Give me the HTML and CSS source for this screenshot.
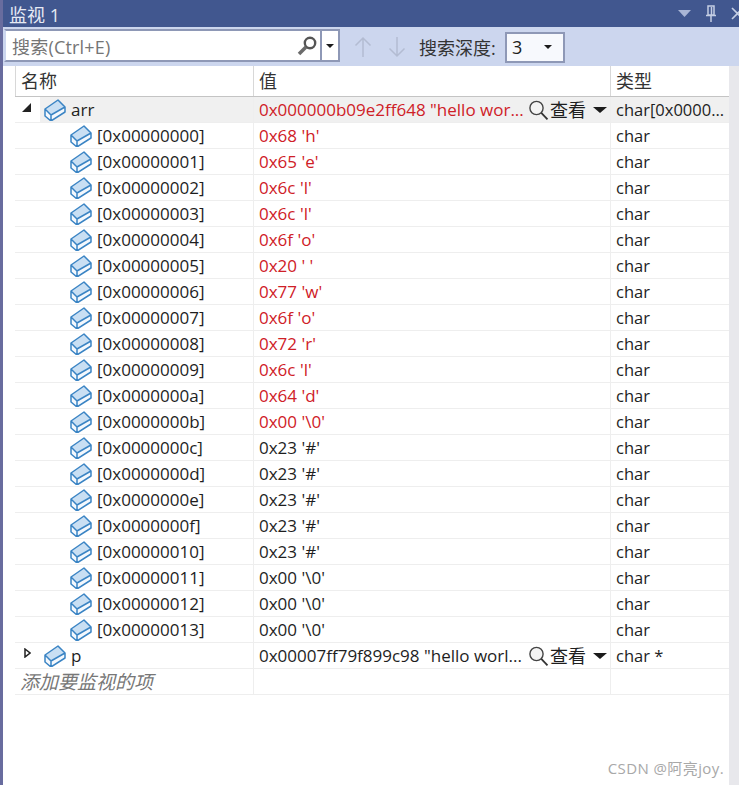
FILE: index.html
```html
<!DOCTYPE html>
<html lang="zh">
<head>
<meta charset="utf-8">
<title>监视 1</title>
<link rel="stylesheet" href="styles.css">
</head>
<body>
<svg class="defs" width="0" height="0">
  <symbol id="cube" viewBox="0 0 22 22">
    <path d="M1 10 14 1l7 7-14 8z" fill="#c9dff3"/>
    <path d="M1 10l6 6v6l-6-5zM7 16l14-8v5L7 22z" fill="#f4f8fd"/>
    <path d="M1 10 14 1l7 7v5L7 22l-6-5zM1 10l6 6 14-8M7 16v6" fill="none" stroke="#3a84c4" stroke-width="1.500" stroke-linejoin="round"/>
  </symbol>
  <symbol id="lens" viewBox="0 0 20 20">
    <circle cx="8" cy="8" r="6.600" fill="#f4f4f4" stroke="#444" stroke-width="1.400"/>
    <path d="M12.800 12.800 19 19.400" stroke="#333" stroke-width="1.800" fill="none"/>
  </symbol>
</svg>
<div class="edge"></div>
<main class="panel">
  <header class="titlebar">
    <span class="title">监视 1</span>
    <span class="winbtns">
      <svg class="wb-caret" width="13" height="7" viewBox="0 0 13 7"><path d="M0 0h13L6.500 7z"/></svg>
      <svg class="wb-pin" width="12" height="17" viewBox="0 0 12 17"><path d="M3 1h6v9H3zM1 10.500h10M6 11v6M6.500 2v8" /></svg>
      <svg class="wb-x" width="11" height="13" viewBox="0 0 11 13"><path d="M1 1l11 11M12 1 1 12"/></svg>
    </span>
  </header>
  <div class="toolbar">
    <div class="search">
      <span class="search-text">搜索(Ctrl+E)</span>
      <svg class="search-icon" width="21" height="20" viewBox="0 0 21 20"><circle cx="13" cy="7" r="5.200" fill="#fff" stroke="#555" stroke-width="2.400"/><path d="M9 11 2 18" stroke="#6b6b6b" stroke-width="3.600"/></svg>
      <span class="search-drop"><i class="caret"></i></span>
    </div>
    <svg class="arrow arrow-up" width="18" height="22" viewBox="0 0 18 22"><path d="M9 21V2M1.500 9.500 9 2l7.500 7.500"/></svg>
    <svg class="arrow arrow-down" width="18" height="22" viewBox="0 0 18 22"><path d="M9 1v19M1.500 12.500 9 20l7.500-7.500"/></svg>
    <span class="depth-label">搜索深度:</span>
    <div class="combo"><span>3</span><i class="caret"></i></div>
  </div>
  <div class="body">
    <section class="table">
      <div class="row head">
        <div class="cell">名称</div>
        <div class="cell">值</div>
        <div class="cell">类型</div>
      </div>
      <div class="row selected">
        <div class="cell name"><span class="twist"><svg width="9" height="9" viewBox="0 0 9 9"><path d="M9 0v9H0z" fill="#222"/></svg></span><span class="nm"><svg class="cube"><use href="#cube"/></svg>arr</span></div>
        <div class="cell val red"><span class="val-text">0x000000b09e2ff648 "hello wor...</span><span class="view"><svg class="lens"><use href="#lens"/></svg><span class="view-label">查看</span><i class="caret wide"></i></span></div>
        <div class="cell type">char[0x0000...</div>
      </div>
      <div class="row"><div class="cell name child"><span class="nm"><svg class="cube"><use href="#cube"/></svg>[0x00000000]</span></div><div class="cell val red">0x68 'h'</div><div class="cell type">char</div></div>
      <div class="row"><div class="cell name child"><span class="nm"><svg class="cube"><use href="#cube"/></svg>[0x00000001]</span></div><div class="cell val red">0x65 'e'</div><div class="cell type">char</div></div>
      <div class="row"><div class="cell name child"><span class="nm"><svg class="cube"><use href="#cube"/></svg>[0x00000002]</span></div><div class="cell val red">0x6c 'l'</div><div class="cell type">char</div></div>
      <div class="row"><div class="cell name child"><span class="nm"><svg class="cube"><use href="#cube"/></svg>[0x00000003]</span></div><div class="cell val red">0x6c 'l'</div><div class="cell type">char</div></div>
      <div class="row"><div class="cell name child"><span class="nm"><svg class="cube"><use href="#cube"/></svg>[0x00000004]</span></div><div class="cell val red">0x6f 'o'</div><div class="cell type">char</div></div>
      <div class="row"><div class="cell name child"><span class="nm"><svg class="cube"><use href="#cube"/></svg>[0x00000005]</span></div><div class="cell val red">0x20 ' '</div><div class="cell type">char</div></div>
      <div class="row"><div class="cell name child"><span class="nm"><svg class="cube"><use href="#cube"/></svg>[0x00000006]</span></div><div class="cell val red">0x77 'w'</div><div class="cell type">char</div></div>
      <div class="row"><div class="cell name child"><span class="nm"><svg class="cube"><use href="#cube"/></svg>[0x00000007]</span></div><div class="cell val red">0x6f 'o'</div><div class="cell type">char</div></div>
      <div class="row"><div class="cell name child"><span class="nm"><svg class="cube"><use href="#cube"/></svg>[0x00000008]</span></div><div class="cell val red">0x72 'r'</div><div class="cell type">char</div></div>
      <div class="row"><div class="cell name child"><span class="nm"><svg class="cube"><use href="#cube"/></svg>[0x00000009]</span></div><div class="cell val red">0x6c 'l'</div><div class="cell type">char</div></div>
      <div class="row"><div class="cell name child"><span class="nm"><svg class="cube"><use href="#cube"/></svg>[0x0000000a]</span></div><div class="cell val red">0x64 'd'</div><div class="cell type">char</div></div>
      <div class="row"><div class="cell name child"><span class="nm"><svg class="cube"><use href="#cube"/></svg>[0x0000000b]</span></div><div class="cell val red">0x00 '\0'</div><div class="cell type">char</div></div>
      <div class="row"><div class="cell name child"><span class="nm"><svg class="cube"><use href="#cube"/></svg>[0x0000000c]</span></div><div class="cell val">0x23 '#'</div><div class="cell type">char</div></div>
      <div class="row"><div class="cell name child"><span class="nm"><svg class="cube"><use href="#cube"/></svg>[0x0000000d]</span></div><div class="cell val">0x23 '#'</div><div class="cell type">char</div></div>
      <div class="row"><div class="cell name child"><span class="nm"><svg class="cube"><use href="#cube"/></svg>[0x0000000e]</span></div><div class="cell val">0x23 '#'</div><div class="cell type">char</div></div>
      <div class="row"><div class="cell name child"><span class="nm"><svg class="cube"><use href="#cube"/></svg>[0x0000000f]</span></div><div class="cell val">0x23 '#'</div><div class="cell type">char</div></div>
      <div class="row"><div class="cell name child"><span class="nm"><svg class="cube"><use href="#cube"/></svg>[0x00000010]</span></div><div class="cell val">0x23 '#'</div><div class="cell type">char</div></div>
      <div class="row"><div class="cell name child"><span class="nm"><svg class="cube"><use href="#cube"/></svg>[0x00000011]</span></div><div class="cell val">0x00 '\0'</div><div class="cell type">char</div></div>
      <div class="row"><div class="cell name child"><span class="nm"><svg class="cube"><use href="#cube"/></svg>[0x00000012]</span></div><div class="cell val">0x00 '\0'</div><div class="cell type">char</div></div>
      <div class="row"><div class="cell name child"><span class="nm"><svg class="cube"><use href="#cube"/></svg>[0x00000013]</span></div><div class="cell val">0x00 '\0'</div><div class="cell type">char</div></div>
      <div class="row">
        <div class="cell name"><span class="twist"><svg width="7" height="10" viewBox="0 0 7 10"><path d="M1 1l5 4-5 4z" fill="#fff" stroke="#222" stroke-width="1.500"/></svg></span><span class="nm"><svg class="cube"><use href="#cube"/></svg>p</span></div>
        <div class="cell val"><span class="val-text">0x00007ff79f899c98 "hello worl...</span><span class="view"><svg class="lens"><use href="#lens"/></svg><span class="view-label">查看</span><i class="caret wide"></i></span></div>
        <div class="cell type">char *</div>
      </div>
      <div class="row">
        <div class="cell add">添加要监视的项</div>
        <div class="cell val"></div>
        <div class="cell"></div>
      </div>
    </section>
    <div class="scrollbar"></div>
  </div>
</main>
<div class="watermark">CSDN @阿亮joy.</div>
</body>
</html>
```

FILE: styles.css
```css
* { box-sizing: border-box; }
html, body { margin: 0; height: 100%; }
body {
  display: flex;
  height: 785px;
  overflow: hidden;
  background: #fff;
  color: #1e1e1e;
  font-family: "Open Sans", "Noto Sans CJK SC", sans-serif;
  font-size: 17px;
}
.defs { position: absolute; }
.edge { width: 3px; background: #686c9e; flex: none; }
.panel { flex: 1; display: flex; flex-direction: column; min-width: 0; }

.titlebar {
  height: 27px;
  background: #41578f;
  color: #e6eaf4;
  display: flex;
  align-items: center;
  justify-content: space-between;
  padding-left: 6px;
  flex: none;
}
.title { font-size: 18px; }
.winbtns { display: flex; align-items: center; gap: 14px; margin-right: -3px; }
.wb-caret { fill: #a9b6d6; }
.wb-pin path { fill: none; stroke: #c4cee4; stroke-width: 1.500; }
.wb-x path { fill: none; stroke: #c4cee4; stroke-width: 1.600; }

.toolbar {
  height: 39px;
  background: #ccd6ee;
  display: flex;
  align-items: center;
  padding: 0 0 2px 1px;
  flex: none;
}
.search {
  width: 336px;
  height: 33px;
  background: #fff;
  border: 2px solid #8e98b6;
  border-left-color: #ccd6ee;
  display: flex;
  align-items: center;
}
.search-text { flex: 1; color: #757575; padding-left: 6px; font-size: 18px; letter-spacing: 0.200px; }
.search-icon { margin-right: 2px; }
.search-drop {
  width: 18px;
  height: 100%;
  border-left: 2px solid #8e98b6;
  display: flex;
  align-items: center;
  justify-content: center;
}
.caret {
  display: block;
  width: 0;
  height: 0;
  border-left: 4px solid transparent;
  border-right: 4px solid transparent;
  border-top: 4px solid #1b1b1b;
}
.caret.wide { border-left-width: 7px; border-right-width: 7px; border-top-width: 6px; margin-left: 7px; }
.arrow { fill: none; stroke: #b3bcd2; stroke-width: 1.500; margin-top: 2px; }
.arrow-up { margin-left: 14px; }
.arrow-down { margin-left: 16px; }
.depth-label { margin: 2px 0 0 13px; font-size: 18px; color: #333; width: 86px; white-space: nowrap; }
.combo {
  width: 60px;
  height: 31px;
  margin-top: 3px;
  background: #f7f9fd;
  border: 2px solid #8e98b6;
  display: flex;
  align-items: center;
  justify-content: space-between;
  padding: 0 11px 0 5px;
  font-size: 18px;
}

.body { flex: 1; display: flex; min-height: 0; }
.table { width: 726px; padding-left: 12px; flex: none; }
.scrollbar { flex: 1; background: #e8e8ec; }

.row {
  display: grid;
  grid-template-columns: 239px 357px 118px;
  height: 26px;
}
.row.head { height: 31px; border-bottom: 1px solid #c4c4c4; }
.cell {
  display: flex;
  align-items: center;
  padding-left: 5px;
  border-bottom: 1px solid #eeeeee;
  border-right: 1px solid #eeeeee;
  white-space: nowrap;
  overflow: hidden;
}
.head .cell { border-bottom: 0; border-right-color: #d8d8d8; font-size: 18px; color: #333; padding-bottom: 2px; }
.head .cell:first-child { border-left: 1px solid #d8d8d8; padding-left: 5px; }
.row .cell:last-child { border-right: 0; }
.name { padding-left: 0; }
.type { font-size: 16.500px; }
.twist { width: 25px; height: 100%; flex: none; display: flex; align-items: center; justify-content: flex-end; padding-right: 9px; padding-bottom: 5px; }
.nm { flex: 1; height: 100%; display: flex; align-items: center; gap: 5px; padding-left: 4px; }
.child .nm { padding-left: 55px; }
.cube { width: 22px; height: 22px; flex: none; margin-top: 1px; }
.red { color: #cf2027; }
.val-text { flex: 1; min-width: 0; }
.view {
  display: flex;
  align-items: center;
  color: #1e1e1e;
  padding-right: 3px;
  font-size: 18px;
  width: 81px;
  flex: none;
}
.view-label { margin-top: -2px; }
.lens { width: 21px; height: 20px; flex: none; margin-left: -1px; margin-right: 1px; }
.selected .cell { background: #f0f0f0; }
.selected .name { background: linear-gradient(90deg, #fff 25px, #f0f0f0 25px); }
.add { font-style: italic; color: #777; font-size: 19px; padding-bottom: 2px; }
.watermark {
  position: absolute;
  right: 15px;
  bottom: 7px;
  font-size: 15px;
  color: #a8a8a8;
  letter-spacing: 0.400px;
}
```
